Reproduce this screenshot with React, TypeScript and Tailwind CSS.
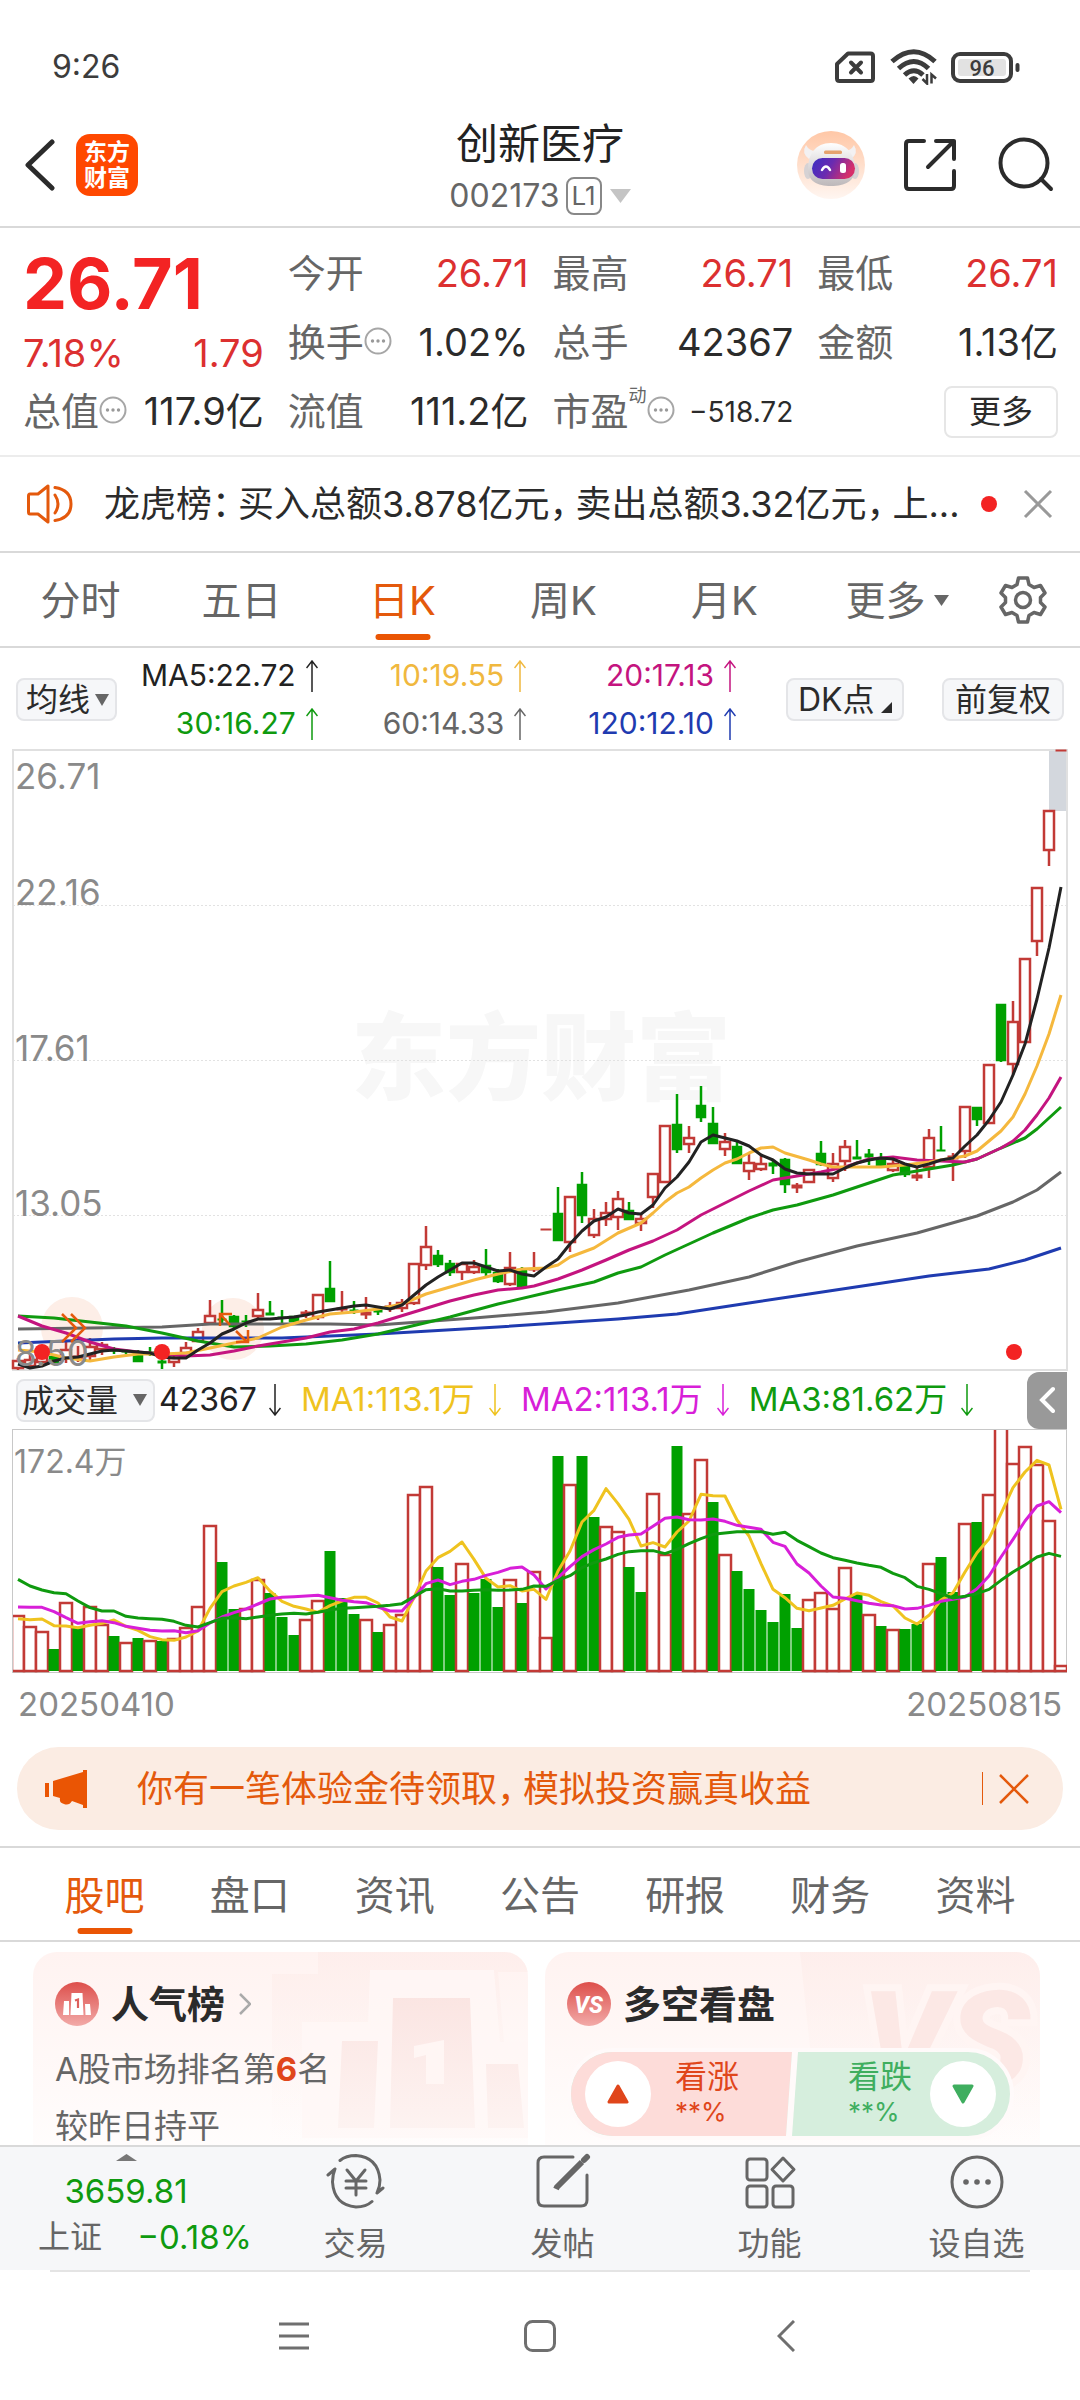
import React from "react";

type Candle = [up: 0 | 1, high: number, top: number, bottom: number, low: number];

const RED = "#c23a36";
const GREEN = "#00a000";

/* Daily candles, left to right, in chart units. */
const CANDLES: Candle[] = [
  [1, 1358, 1361, 1368, 1370], [1, 1354, 1360, 1366, 1368], [1, 1350, 1355, 1362, 1364], [0, 1354, 1357, 1362, 1364],
  [1, 1340, 1350, 1358, 1363], [1, 1346, 1356, 1359, 1362], [1, 1338, 1347, 1356, 1360], [1, 1342, 1345, 1349, 1355],
  [0, 1347, 1350, 1351, 1354], [0, 1349, 1351, 1352, 1354], [0, 1350, 1354, 1361, 1361], [0, 1347, 1352, 1353, 1356],
  [0, 1350, 1361, 1363, 1369], [1, 1354, 1358, 1362, 1367], [1, 1342, 1348, 1353, 1354], [1, 1328, 1332, 1341, 1342],
  [1, 1300, 1316, 1323, 1324], [0, 1300, 1319, 1320, 1323], [0, 1315, 1317, 1326, 1330], [0, 1315, 1321, 1322, 1327],
  [1, 1293, 1310, 1316, 1320], [0, 1301, 1313, 1315, 1315], [0, 1310, 1317, 1318, 1323], [0, 1316, 1317, 1321, 1322],
  [1, 1310, 1312, 1314, 1318], [1, 1295, 1295, 1317, 1320], [0, 1261, 1289, 1301, 1301], [1, 1291, 1308, 1310, 1312],
  [0, 1301, 1310, 1311, 1314], [1, 1297, 1312, 1315, 1319], [0, 1306, 1309, 1312, 1315], [1, 1302, 1306, 1309, 1312],
  [1, 1299, 1303, 1308, 1312], [1, 1264, 1264, 1303, 1305], [1, 1226, 1247, 1265, 1270], [0, 1250, 1256, 1264, 1267],
  [0, 1260, 1264, 1272, 1276], [1, 1263, 1264, 1272, 1280], [1, 1260, 1267, 1272, 1274], [0, 1249, 1266, 1272, 1278],
  [0, 1269, 1273, 1281, 1283], [1, 1252, 1268, 1284, 1286], [0, 1267, 1270, 1286, 1289], [1, 1252, 1269, 1270, 1272],
  [1, 1229, 1229, 1230, 1230], [0, 1187, 1214, 1240, 1240], [1, 1197, 1197, 1242, 1252], [0, 1172, 1185, 1215, 1223],
  [1, 1209, 1219, 1235, 1238], [1, 1202, 1213, 1219, 1226], [1, 1191, 1199, 1217, 1230], [0, 1202, 1211, 1219, 1219],
  [1, 1213, 1219, 1223, 1231], [1, 1174, 1174, 1197, 1208], [1, 1126, 1126, 1182, 1183], [0, 1094, 1125, 1149, 1153],
  [1, 1126, 1138, 1144, 1153], [0, 1086, 1106, 1117, 1122], [0, 1107, 1124, 1143, 1144], [1, 1133, 1142, 1149, 1156],
  [0, 1142, 1147, 1163, 1163], [1, 1153, 1163, 1171, 1180], [1, 1156, 1164, 1169, 1171], [0, 1160, 1163, 1166, 1174],
  [0, 1158, 1160, 1184, 1193], [1, 1183, 1185, 1188, 1193], [1, 1169, 1170, 1182, 1183], [0, 1141, 1154, 1164, 1166],
  [1, 1153, 1164, 1178, 1182], [1, 1140, 1147, 1161, 1171], [0, 1140, 1157, 1159, 1159], [0, 1149, 1154, 1157, 1165],
  [0, 1153, 1160, 1165, 1165], [1, 1160, 1164, 1170, 1172], [0, 1166, 1167, 1174, 1177], [1, 1166, 1175, 1178, 1181],
  [1, 1129, 1138, 1167, 1178], [0, 1126, 1150, 1151, 1151], [1, 1153, 1156, 1159, 1181], [1, 1107, 1107, 1151, 1158],
  [0, 1108, 1108, 1119, 1126], [1, 1065, 1065, 1123, 1124], [0, 1005, 1005, 1060, 1062], [1, 1001, 1022, 1064, 1075],
  [1, 959, 959, 1042, 1043], [1, 888, 888, 941, 956], [1, 811, 811, 850, 866], [1, 750, 750, 751, 751],
];

/* Moving averages as [day, level] pairs. */
const PRICE_LINES: { color: string; points: [number, number][] }[] = [
  { color: "#1f3bb0", points: [[0, 1343], [8, 1339], [12, 1338], [22, 1338], [30, 1334], [40, 1327], [50, 1319], [55, 1314], [61, 1303], [66, 1294], [71, 1285], [76, 1276], [81, 1269], [84, 1260], [87, 1248]] },
  { color: "#666666", points: [[0, 1329], [6, 1328], [12, 1327], [16, 1324], [20, 1324], [26, 1324], [30, 1325], [38, 1318], [44, 1312], [50, 1303], [56, 1290], [61, 1277], [65, 1262], [70, 1246], [75, 1233], [80, 1216], [83, 1202], [85, 1190], [87, 1172]] },
  { color: "#0f9a0f", points: [[0, 1316], [3, 1318], [6, 1322], [9, 1326], [12, 1333], [15, 1341], [18, 1347], [21, 1346], [24, 1344], [27, 1340], [30, 1334], [36, 1317], [40, 1304], [45, 1290], [48, 1282], [50, 1273], [52, 1267], [54, 1255], [56, 1244], [58, 1233], [61, 1218], [63, 1210], [65, 1205], [68, 1195], [70, 1187], [73, 1175], [75, 1171], [78, 1165], [80, 1159], [82, 1148], [84, 1138], [85, 1129], [86, 1118], [87, 1107]] },
  { color: "#c4147f", points: [[0, 1316], [2, 1326], [4, 1333], [6, 1342], [8, 1349], [10, 1352], [12, 1354], [14, 1356], [16, 1355], [18, 1351], [20, 1346], [22, 1342], [24, 1338], [26, 1332], [28, 1329], [30, 1323], [33, 1312], [36, 1301], [38, 1295], [40, 1290], [42, 1288], [43, 1286], [45, 1279], [47, 1270], [49, 1260], [51, 1250], [53, 1241], [55, 1230], [57, 1215], [59, 1203], [61, 1191], [63, 1180], [65, 1176], [67, 1172], [69, 1167], [71, 1159], [73, 1157], [75, 1160], [77, 1161], [79, 1162], [80, 1159], [82, 1148], [83, 1141], [84, 1130], [85, 1115], [86, 1098], [87, 1077]] },
  { color: "#f5b83d", points: [[0, 1350], [2, 1352], [4, 1358], [6, 1361], [8, 1357], [10, 1354], [12, 1354], [14, 1353], [16, 1348], [18, 1343], [20, 1338], [22, 1327], [24, 1320], [26, 1314], [28, 1312], [30, 1309], [32, 1304], [34, 1294], [36, 1287], [38, 1280], [40, 1274], [42, 1269], [44, 1268], [45, 1265], [46, 1257], [48, 1248], [50, 1233], [52, 1223], [53, 1213], [54, 1202], [55, 1193], [56, 1187], [57, 1178], [58, 1170], [59, 1163], [60, 1159], [61, 1153], [62, 1148], [63, 1147], [64, 1153], [66, 1160], [67, 1164], [68, 1167], [70, 1167], [72, 1167], [74, 1165], [76, 1162], [78, 1158], [79, 1156], [80, 1151], [82, 1131], [83, 1117], [84, 1094], [85, 1066], [86, 1034], [87, 995]] },
  { color: "#222222", points: [[0, 1364], [1, 1368], [2, 1366], [3, 1361], [4, 1358], [5, 1357], [6, 1354], [7, 1351], [8, 1350], [9, 1351], [10, 1352], [11, 1353], [12, 1357], [13, 1358], [14, 1358], [15, 1350], [16, 1343], [17, 1334], [18, 1329], [19, 1323], [20, 1319], [21, 1319], [22, 1318], [23, 1317], [24, 1315], [25, 1312], [26, 1310], [27, 1308], [28, 1306], [29, 1305], [30, 1307], [31, 1309], [32, 1305], [33, 1295], [34, 1285], [35, 1277], [36, 1270], [37, 1263], [38, 1263], [39, 1267], [40, 1271], [41, 1270], [42, 1274], [43, 1276], [44, 1267], [45, 1259], [46, 1244], [47, 1231], [48, 1221], [49, 1217], [50, 1209], [51, 1213], [52, 1214], [53, 1205], [54, 1188], [55, 1177], [56, 1162], [57, 1142], [58, 1135], [59, 1138], [60, 1141], [61, 1146], [62, 1155], [63, 1160], [64, 1169], [65, 1173], [66, 1174], [67, 1174], [68, 1174], [69, 1168], [70, 1163], [71, 1160], [72, 1158], [73, 1159], [74, 1164], [75, 1167], [76, 1164], [77, 1160], [78, 1158], [79, 1146], [80, 1135], [81, 1120], [82, 1102], [83, 1075], [84, 1044], [85, 999], [86, 948], [87, 887]] },
];

/* Top of each volume bar and of the three averages, in thirds of a unit; the base line is at 900. */
const VOLUME_TOPS = [
  736, 767, 783, 835, 696, 770, 709, 762, 796, 817, 801, 811, 811, 803, 771, 707, 465, 572, 715, 713, 626, 666,
  738, 792, 746, 690, 541, 681, 729, 746, 782, 762, 733, 371, 348, 587, 672, 580, 665, 624, 709, 628, 696, 604,
  801, 256, 343, 255, 438, 468, 483, 587, 662, 368, 553, 225, 429, 268, 392, 551, 600, 653, 717, 754, 669, 772,
  687, 667, 713, 591, 668, 732, 766, 776, 773, 760, 578, 557, 663, 458, 454, 372, 160, 278, 228, 282, 450, 885,
];
const VOLUME_UP =
  "RRRGRGRRGRGRGRRRRGGRRGGGRRGGGRGRRRRGGRGGGRGRRGRGGRRGGRRGRRGRGGGGGGRRRRGRGRGGRGGRGRRRRRRR";

const VOLUME_LINES = [
  {
    color: "#efc31f",
    points: [743, 746, 744, 764, 765, 770, 763, 757, 747, 766, 778, 797, 806, 808, 798, 780, 712, 662, 645, 634, 620, 660, 691, 706, 714, 724, 704, 690, 679, 679, 696, 738, 750, 680, 600, 560, 541, 513, 565, 622, 648, 644, 660, 655, 685, 600, 540, 453, 418, 353, 398, 445, 525, 515, 528, 483, 450, 370, 374, 375, 447, 495, 578, 655, 680, 712, 719, 711, 703, 684, 666, 673, 692, 705, 741, 759, 733, 687, 665, 603, 545, 503, 428, 350, 303, 268, 282, 415],
  },
  {
    color: "#d81fd8",
    points: [708, 709, 709, 722, 740, 757, 752, 749, 755, 766, 772, 778, 780, 779, 785, 779, 756, 738, 725, 714, 699, 684, 679, 677, 675, 673, 680, 688, 692, 695, 708, 720, 720, 680, 638, 627, 641, 631, 625, 613, 604, 592, 588, 612, 654, 620, 587, 557, 536, 519, 499, 492, 489, 466, 442, 438, 446, 447, 444, 451, 463, 469, 475, 514, 526, 579, 606, 645, 678, 682, 689, 697, 702, 704, 714, 712, 703, 691, 685, 678, 653, 615, 558, 505, 450, 405, 392, 425],
  },
  {
    color: "#0f9a0f",
    points: [625, 645, 657, 665, 668, 690, 710, 720, 720, 736, 741, 743, 745, 751, 763, 768, 755, 742, 740, 743, 738, 733, 729, 727, 729, 724, 717, 712, 710, 708, 706, 703, 698, 677, 656, 653, 660, 660, 658, 656, 658, 657, 655, 645, 646, 628, 614, 590, 575, 564, 550, 542, 539, 539, 548, 535, 518, 503, 490, 486, 482, 482, 482, 490, 484, 508, 527, 546, 560, 568, 576, 583, 589, 607, 620, 646, 655, 668, 681, 676, 668, 655, 628, 603, 582, 558, 547, 556],
  },
];

const dayX = (i: number) => Math.round(18 + i * 11.99);
const volumeY = (v: number) => Math.round(v / 3);

function StatusBar() {
  return (
    <div className="flex h-[104px] items-center pt-[30px] pr-[60px] pl-[52px] text-[#3c3c3c]">
      <span className="flex-1 text-[32px] leading-10">9:26</span>
      <svg className="mr-[15px] h-8 w-10" viewBox="0 0 40 32" fill="none" stroke="currentColor" strokeWidth="4">
        <path d="M13 2.5H35.5Q38 2.5 38 5V27.500Q38 30 35.500 30H4.500Q2 30 2 27.500V13Z" strokeLinejoin="round" />
        <path d="M16 11.500L26 21.500M26 11.500L16 21.500" strokeLinecap="round" />
      </svg>
      <svg className="mr-[13px] h-9 w-12" viewBox="0 0 48 36" fill="none" stroke="currentColor" strokeWidth="5">
        <path d="M2 12.500Q24 -7 45 12.500" />
        <path d="M8.500 19.500Q24 5.500 38.500 19.500" />
        <path d="M14.500 26Q24 17.500 33 26" />
        <path d="M18.500 29.500Q24 24.500 28.500 29.500L23.500 35Z" fill="currentColor" stroke="none" />
        <path d="M37 25V34.500L32.500 30M41.500 34.500V25.500L46 29.500" strokeWidth="2.500" />
      </svg>
      <svg className="h-[31px] w-[69px]" viewBox="0 0 69 31">
        <rect x="2" y="2" width="58" height="27" rx="7" fill="none" stroke="currentColor" strokeWidth="4" />
        <rect x="7" y="7" width="48" height="17" rx="3" fill="#e2e2e2" />
        <rect x="64.500" y="11" width="4" height="9" rx="2" fill="currentColor" />
        <text x="31" y="23.500" textAnchor="middle" fontSize="22" fontWeight="500" fill="currentColor" fontFamily="Roboto">96</text>
      </svg>
    </div>
  );
}

function Robot() {
  return (
    <svg className="size-[68px]" viewBox="0 0 68 68">
      <defs>
        <linearGradient id="halo" x1="0" y1="0" x2="0" y2="1">
          <stop offset="0" stopColor="#ffc7a6" />
          <stop offset="1" stopColor="#fff6f1" />
        </linearGradient>
        <linearGradient id="visor" x1="0" y1="0" x2="1" y2="0.300">
          <stop offset="0" stopColor="#3a2fc4" />
          <stop offset="0.500" stopColor="#6a2bb0" />
          <stop offset="1" stopColor="#d62f6a" />
        </linearGradient>
        <linearGradient id="shell" x1="0" y1="0" x2="0" y2="1">
          <stop offset="0" stopColor="#ffffff" />
          <stop offset="1" stopColor="#bdb8ba" />
        </linearGradient>
      </defs>
      <circle cx="34" cy="34" r="34" fill="url(#halo)" />
      <path d="M12 28Q4 22 9 14Q12 20 19 20ZM54 28Q62 22 57 14Q54 20 47 20Z" fill="#f3f1f2" />
      <ellipse cx="11" cy="40" rx="4" ry="8" fill="#d6d2d4" />
      <ellipse cx="58" cy="40" rx="4" ry="8" fill="#d6d2d4" />
      <path d="M34 12C50 12 58 24 58 38C58 50 48 55 34 55C20 55 11 50 11 38C11 24 18 12 34 12Z" fill="url(#shell)" />
      <rect x="27" y="19.500" width="18" height="3.500" rx="1.500" fill="#e5a26e" />
      <rect x="15" y="27" width="43" height="21" rx="10.500" fill="url(#visor)" />
      <path d="M25 39Q29 32 33 39" fill="none" stroke="#fff" strokeWidth="2.500" strokeLinecap="round" />
      <rect x="43" y="32" width="6" height="10" rx="2.500" fill="#fff" />
    </svg>
  );
}

function Header() {
  return (
    <header className="relative flex h-[124px] items-center border-b-2 border-[#d9d9d9] pr-[26px] pl-6 text-[#2b2b2b]">
      <button aria-label="返回" className="w-[52px]">
        <svg className="h-[52px] w-8" viewBox="0 0 32 52" fill="none" stroke="currentColor" strokeWidth="5">
          <path d="M28 3L4 26L28 49" strokeLinecap="round" strokeLinejoin="round" />
        </svg>
      </button>
      <a
        href="#home"
        className="flex size-[62px] flex-col items-center justify-center rounded-[14px] bg-[#ff4800] text-[23px] leading-[26px] font-bold text-white"
      >
        <span>东方</span>
        <span>财富</span>
      </a>
      <div className="absolute inset-x-0 top-4 mx-auto flex w-fit flex-col items-center">
        <h1 className="text-[42px] leading-[48px] text-[#222]">创新医疗</h1>
        <div className="mt-[8px] flex items-center text-[32px] leading-[40px] text-[#666]">
          <span>002173</span>
          <span className="ml-[6px] rounded-lg border-2 border-[#888] px-1 text-[26px] leading-[34px]">L1</span>
          <svg className="ml-2 h-[14px] w-[21px]" viewBox="0 0 21 14"><path d="M0 0H21L10.500 14Z" fill="#c4c4c4" /></svg>
        </div>
      </div>
      <div className="ml-auto flex items-center">
        <button aria-label="智能助手"><Robot /></button>
        <button aria-label="分享" className="ml-[38px]">
          <svg className="size-[54px]" viewBox="0 0 54 54" fill="none" stroke="currentColor" strokeWidth="4" strokeLinecap="round" strokeLinejoin="round">
            <path d="M21 3H6Q3 3 3 6V48Q3 51 6 51H48Q51 51 51 48V33M33 3H51V21M51 3L25 29" />
          </svg>
        </button>
        <button aria-label="搜索" className="ml-[41px]">
          <svg className="size-[56px]" viewBox="0 0 56 56" fill="none" stroke="currentColor" strokeWidth="4" strokeLinecap="round">
            <circle cx="26" cy="26" r="23.500" />
            <path d="M43 42L53 52" />
          </svg>
        </button>
      </div>
    </header>
  );
}

function InfoDots() {
  return (
    <svg className="mb-1 size-7 shrink-0" viewBox="0 0 28 28">
      <circle cx="14" cy="14" r="12.500" fill="none" stroke="#a6a6a6" strokeWidth="2" />
      <g fill="#999"><circle cx="8.500" cy="14" r="1.700" /><circle cx="14" cy="14" r="1.700" /><circle cx="19.500" cy="14" r="1.700" /></g>
    </svg>
  );
}

function Stat({ label, value, tone = "text-[#2b2b2b]", info = false }: { label: string; value: string; tone?: string; info?: boolean }) {
  return (
    <div className="flex h-[69px] items-center whitespace-nowrap">
      <span className="text-[38px] text-[#666]">{label}</span>
      {info && <InfoDots />}
      <span className={`ml-auto text-[38px] ${tone}`}>{value}</span>
    </div>
  );
}

function Quote() {
  const red = "text-[#dc3030]";
  return (
    <section className="grid grid-cols-4 gap-x-6 border-b-2 border-[#ececec] pt-[11px] pr-[22px] pb-[9px] pl-[23px]">
      <div className="row-span-2">
        <div className="text-[70px] leading-[90px] font-bold text-[#f32323]">26.71</div>
        <div className={`flex justify-between text-[38px] leading-[48px] ${red}`}>
          <span>7.18%</span>
          <span>1.79</span>
        </div>
      </div>
      <Stat label="今开" value="26.71" tone={red} />
      <Stat label="最高" value="26.71" tone={red} />
      <Stat label="最低" value="26.71" tone={red} />
      <Stat label="换手" value="1.02%" info />
      <Stat label="总手" value="42367" />
      <Stat label="金额" value="1.13亿" />
      <Stat label="总值" value="117.9亿" info />
      <Stat label="流值" value="111.2亿" />
      <div className="flex h-[69px] items-center whitespace-nowrap">
        <span className="text-[38px] text-[#666]">市盈</span>
        <sup className="-top-4 text-[18px] text-[#666]">动</sup>
        <InfoDots />
        <span className="ml-auto text-[28px] text-[#2b2b2b]">−518.72</span>
      </div>
      <div className="flex h-[69px] items-center justify-end">
        <button className="h-[52px] w-[114px] rounded-lg border-2 border-[#e6e6e6] text-[32px] leading-10 text-[#2b2b2b]">更多</button>
      </div>
    </section>
  );
}

function Phrases({ parts }: { parts: string[] }) {
  return (
    <p className="flex flex-1 gap-2 text-[36px] whitespace-nowrap [font-feature-settings:'halt']">
      {parts.map((p) => (
        <span key={p}>{p}</span>
      ))}
    </p>
  );
}

function NewsBar() {
  return (
    <section className="flex h-[96px] items-center border-b-2 border-[#d9d9d9] px-[27px] text-[#2b2b2b]">
      <svg className="mr-[31px] h-10 w-[46px] shrink-0" viewBox="0 0 46 40" fill="none" stroke="#e4590c" strokeWidth="3" strokeLinejoin="round" strokeLinecap="round">
        <path d="M21 2V38L11 30H3Q1.500 30 1.500 28V12Q1.500 10 3 10H11Z" />
        <path d="M28 11Q34 20 28 29M28 3.500Q44 6 44 20Q44 34 28 36.500" />
      </svg>
      <Phrases parts={["龙虎榜：", "买入总额3.878亿元，", "卖出总额3.32亿元，", "上..."]} />
      <span className="size-4 shrink-0 rounded-full bg-[#f32323]" />
      <button aria-label="关闭公告" className="ml-[26px]">
        <svg className="size-[30px]" viewBox="0 0 30 30" stroke="#999" strokeWidth="3"><path d="M2 2L28 28M28 2L2 28" /></svg>
      </button>
    </section>
  );
}

function PeriodTabs() {
  return (
    <nav className="grid h-[95px] grid-cols-[161fr_161fr_161fr_161fr_161fr_184fr_68fr] border-b-2 border-[#d9d9d9] pr-[23px] text-[40px] text-[#666]">
      {["分时", "五日", "日K", "周K", "月K"].map((t) => (
        <button key={t} className={t === "日K" ? "relative pt-[2px] text-[#e4590c]" : "pt-[2px]"}>
          {t}
          {t === "日K" && <span className="absolute bottom-[6px] left-1/2 h-[6px] w-[55px] -translate-x-1/2 rounded-full bg-[#ea5504]" />}
        </button>
      ))}
      <button aria-haspopup="menu" className="flex items-center justify-center gap-2 pt-[2px]">
        更多
        <svg className="h-[11px] w-[15px]" viewBox="0 0 15 11"><path d="M0 0H15L7.500 11Z" fill="#666" /></svg>
      </button>
      <button aria-label="设置" className="flex items-center justify-center">
        <svg className="size-[50px]" viewBox="0 0 50 50" fill="none" stroke="#666" strokeWidth="3.500" strokeLinejoin="round">
          <path d="M20.500 3H29.500L31 9.500L36 12.500L42.500 10.500L47 18L42.500 22.500V27.500L47 32L42.500 39.500L36 37.500L31 40.500L29.500 47H20.500L19 40.500L14 37.500L7.500 39.500L3 32L7.500 27.500V22.500L3 18L7.500 10.500L14 12.500L19 9.500Z" />
          <circle cx="25" cy="25" r="7.500" />
        </svg>
      </button>
    </nav>
  );
}

function Arrow({ down = false }: { down?: boolean }) {
  return (
    <svg className="h-8 w-3 shrink-0" viewBox="0 0 12 32" fill="none" stroke="currentColor" strokeWidth="1.500">
      <path d={down ? "M6 0V31M0.500 24L6 31L11.500 24" : "M6 32V1M0.500 8L6 1L11.500 8"} />
    </svg>
  );
}

function Picker({ name, text, wide = false }: { name: string; text: string; wide?: boolean }) {
  return (
    <label className={`flex h-[43px] shrink-0 items-center rounded-lg border-2 border-[#e4e5e8] bg-[#f6f7f9] pr-[6px] text-[#2b2b2b] ${wide ? "gap-[14px] pl-1" : "gap-1 pl-2"}`}>
      <select aria-label={name} className="h-full appearance-none bg-transparent text-[32px] leading-[39px]">
        <option>{text}</option>
      </select>
      <svg className="h-3 w-[14px]" viewBox="0 0 14 12"><path d="M0 0H14L7 12Z" fill="#666" /></svg>
    </label>
  );
}

const AVERAGES: [string, string][] = [
  ["MA5:22.72", "text-[#222]"],
  ["10:19.55", "text-[#f0b83e]"],
  ["20:17.13", "text-[#c4147f]"],
  ["30:16.27", "text-[#0f9a0f]"],
  ["60:14.33", "text-[#666]"],
  ["120:12.10", "text-[#1f3bb0]"],
];

function AverageBar() {
  return (
    <section className="flex h-[101px] items-center px-4 pt-[2px]">
      <Picker name="均线指标" text="均线" />
      <div className="grid flex-1 grid-cols-[201fr_209fr_210fr]">
        {AVERAGES.map(([text, tone]) => (
          <span key={text} className={`flex h-12 items-center justify-end gap-[10px] text-[30px] ${tone}`}>
            {text}
            <Arrow />
          </span>
        ))}
      </div>
      <button className="ml-[50px] flex h-[43px] w-[118px] items-center rounded-lg border-2 border-[#e4e5e8] bg-[#f6f7f9] pl-[10px] text-[32px] leading-9 whitespace-nowrap text-[#2b2b2b]">
        DK点
        <svg className="mb-[6px] ml-[6px] size-[11px] self-end" viewBox="0 0 11 11"><path d="M11 0V11H0Z" fill="#2b2b2b" /></svg>
      </button>
      <button className="ml-[38px] h-[43px] w-[122px] rounded-lg border-2 border-[#e4e5e8] bg-[#f6f7f9] text-[32px] leading-9 text-[#2b2b2b]">前复权</button>
    </section>
  );
}

function PriceChart() {
  return (
    <svg className="block w-full" viewBox="0 749 1080 622" role="img" aria-label="日K线图">
      <text x="541" y="1093" textAnchor="middle" fontSize="95" fontWeight="900" fill="#f7f7f7">东方财富</text>
      <g stroke="#e2e2e2" strokeDasharray="2 2"><path d="M13 905.500H1067M13 1060.500H1067M13 1215.500H1067" /></g>
      <rect x="13" y="750" width="1054" height="620" fill="none" stroke="#e0e0e0" strokeWidth="2" />
      <circle cx="72" cy="1328" r="31" fill="#fdeee7" />
      <circle cx="233" cy="1329" r="31" fill="#fdeee7" />
      <rect x="1049" y="751" width="17" height="60" fill="#d3d7dd" />
      {CANDLES.map(([up, high, top, bottom, low], i) => {
        const x = dayX(i);
        const color = up ? RED : GREEN;
        const flat = bottom - top < 4;
        return (
          <g key={i} stroke={color} strokeWidth="2.500">
            <path d={`M${x} ${high}V${top}M${x} ${bottom}V${low}`} />
            <rect x={x - (up ? 5 : 4)} y={top} width={up ? 10 : 8} height={Math.max(bottom - top, 1)} fill={up && !flat ? "#fff" : color} strokeWidth={flat ? 1 : 2.5} />
          </g>
        );
      })}
      {PRICE_LINES.map((l) => (
        <polyline key={l.color} fill="none" stroke={l.color} strokeWidth="3" strokeLinejoin="round" points={l.points.map(([i, y]) => `${dayX(i)},${y}`).join(" ")} />
      ))}
      <g fontSize="35" fill="#8a8a8a">
        <text x="15" y="789">26.71</text>
        <text x="15" y="905">22.16</text>
        <text x="15" y="1061">17.61</text>
        <text x="15" y="1216">13.05</text>
        <text x="15" y="1366">8.50</text>
      </g>
      <g fill="none" stroke="#e4590c" strokeWidth="2.500">
        <path d="M62 1314L76 1328L62 1342M71 1314L85 1328L71 1342" />
        <path d="M220 1326V1314H232M221 1315L230 1325M236 1331L247 1342M248 1330V1342H236" />
      </g>
      <g fill="#f32323"><circle cx="42" cy="1352" r="8" /><circle cx="162" cy="1352" r="8" /><circle cx="1014" cy="1352" r="8" /></g>
    </svg>
  );
}

function VolumeBar() {
  return (
    <section className="flex h-[58px] items-center pr-[13px] pl-4 text-[33px] whitespace-nowrap">
      <Picker name="副图指标" text="成交量" wide />
      <span className="ml-1 flex items-center gap-3 text-[32px] text-[#222]">42367<Arrow down /></span>
      <span className="ml-5 flex items-center gap-[14px] text-[#efc31f]">MA1:113.1万<Arrow down /></span>
      <span className="ml-5 flex items-center gap-[14px] text-[#d81fd8]">MA2:113.1万<Arrow down /></span>
      <span className="ml-5 flex items-center gap-[14px] text-[#0f9a0f]">MA3:81.62万<Arrow down /></span>
      <button aria-label="展开" className="ml-auto flex h-[57px] w-10 items-center justify-center rounded-l-xl bg-[#999]">
        <svg className="h-7 w-4" viewBox="0 0 16 28" fill="none" stroke="#fff" strokeWidth="4" strokeLinecap="round"><path d="M14 3L3 14L14 25" /></svg>
      </button>
    </section>
  );
}

function VolumeChart() {
  return (
    <div>
      <svg className="block w-full" viewBox="0 58 1080 244" role="img" aria-label="成交量图">
        <rect x="12.500" y="58.500" width="1054" height="243" fill="none" stroke="#c8c8c8" />
        <text x="14" y="102" fontSize="32" fill="#8a8a8a">172.4万</text>
        <clipPath id="volume-area"><rect x="13" y="59" width="1054" height="243" /></clipPath>
        <g clipPath="url(#volume-area)">
          {VOLUME_TOPS.map((top, i) =>
            VOLUME_UP[i] === "R" ? (
              <rect key={i} x={dayX(i) - 6} y={volumeY(top)} width="12" height={300 - volumeY(top)} fill="#fff" stroke={RED} strokeWidth="2.500" />
            ) : (
              <rect key={i} x={dayX(i) - 5.5} y={volumeY(top)} width="11" height={300 - volumeY(top)} fill={GREEN} />
            ),
          )}
          {VOLUME_LINES.map((l) => (
            <polyline key={l.color} fill="none" stroke={l.color} strokeWidth="3" strokeLinejoin="round" points={l.points.map((y, i) => `${dayX(i)},${y / 3}`).join(" ")} />
          ))}
        </g>
      </svg>
      <div className="flex justify-between px-[18px] pt-[11px] text-[33px] leading-10 text-[#8a8a8a]">
        <span>20250410</span>
        <span>20250815</span>
      </div>
    </div>
  );
}

function Promo() {
  return (
    <div className="mx-[17px] mt-[23px] mb-4 flex h-[83px] items-center rounded-full bg-[#fbece3] pr-[34px] pl-7 text-[#e4590c]">
      <svg className="mr-[50px] h-[38px] w-[42px] shrink-0" viewBox="0 0 42 38" fill="#ea5504">
        <path d="M0 13H4V27H0ZM8 11L38 2V0H42V38H38V35L27 31Q24 36 19 34Q14 33 15 28L8 26Z" />
      </svg>
      <Phrases parts={["你有一笔体验金待领取，", "模拟投资赢真收益"]} />
      <span className="h-[33px] w-px bg-[#e4590c]" />
      <button aria-label="关闭提示" className="ml-4">
        <svg className="size-[30px]" viewBox="0 0 30 30" stroke="#e4590c" strokeWidth="2.500"><path d="M1 1L29 29M29 1L1 29" /></svg>
      </button>
    </div>
  );
}

function SectionTabs() {
  return (
    <nav className="grid h-[96px] grid-cols-7 border-y-2 border-[#d9d9d9] px-8 text-[40px] text-[#666]">
      {["股吧", "盘口", "资讯", "公告", "研报", "财务", "资料"].map((t, i) => (
        <button key={t} className={i === 0 ? "relative pt-[3px] text-[#e4590c]" : "pt-[3px]"}>
          {t}
          {i === 0 && <span className="absolute bottom-[6px] left-1/2 h-[6px] w-[55px] -translate-x-1/2 rounded-full bg-[#ea5504]" />}
        </button>
      ))}
    </nav>
  );
}

function Badge({ kind }: { kind: "rank" | "vs" }) {
  return (
    <svg className="size-11 shrink-0" viewBox="0 0 44 44">
      <defs>
        <linearGradient id="badge" x1="0" y1="0" x2="0" y2="1">
          <stop offset="0" stopColor="#dd4f4b" />
          <stop offset="1" stopColor="#f2aaa8" />
        </linearGradient>
      </defs>
      <circle cx="22" cy="22" r="22" fill="url(#badge)" />
      {kind === "rank" ? (
        <>
          <path d="M9 19H14V33H8ZM16.500 11H27.500L28.500 33H15.500ZM30 22H35L36 33H30.500Z" fill="#fff" />
          <path d="M20 18.500L23 17.500V26" fill="none" stroke="#dd5f5b" strokeWidth="2.200" />
        </>
      ) : (
        <text x="21.500" y="30.500" textAnchor="middle" fontSize="23" fontStyle="italic" fontWeight="800" fill="#fff" fontFamily="Roboto">VS</text>
      )}
    </svg>
  );
}

function Cards() {
  return (
    <section className="grid h-[203px] grid-cols-2 gap-[17px] overflow-hidden pt-[10px] pr-10 pl-[33px]">
      <article className="relative h-[240px] overflow-hidden rounded-[24px] bg-gradient-to-b from-[#fff3f1] to-white pt-[27px] pl-[22px] text-[#666]">
        <svg className="absolute top-0 right-0 h-[192px] w-[256px]" viewBox="0 0 256 192">
          <defs>
            <linearGradient id="fade" x1="0" y1="0" x2="0" y2="1">
              <stop offset="0" stopColor="#fae2df" />
              <stop offset="1" stopColor="#fdf2f0" />
            </linearGradient>
            <linearGradient id="haze" x1="0" y1="0" x2="0" y2="1">
              <stop offset="0" stopColor="#fdebe8" stopOpacity="0.600" />
              <stop offset="1" stopColor="#fdf3f1" stopOpacity="0" />
            </linearGradient>
          </defs>
          <path d="M46 0H256V20H226L232 90H256V192H0V22H46Z" fill="url(#haze)" />
          <path d="M98 18H222L228 90H256V186H30V70H96Z" fill="#fff8f6" opacity="0.800" />
          <path d="M70 89H106L102 176H66ZM121 46H198L203 176H118ZM214 112H246L252 176H216Z" fill="url(#fade)" opacity="0.850" />
          <path d="M142 94L172 88V132H154V103L142 106Z" fill="#fff6f4" />
        </svg>
        <div className="relative">
          <h2 className="flex h-[50px] items-center text-[38px] font-bold text-[#2b2b2b]">
            <Badge kind="rank" />
            <a href="#rank" className="ml-3 flex items-center gap-[14px]">
              人气榜
              <svg className="h-[22px] w-3" viewBox="0 0 12 22" fill="none" stroke="#aaa" strokeWidth="2.500"><path d="M1 1L11 11L1 21" /></svg>
            </a>
          </h2>
          <p className="mt-[18px] text-[33px] leading-[44px]">A股市场排名第<b className="text-[#e0461b]">6</b>名</p>
          <p className="mt-[13px] text-[33px] leading-[44px]">较昨日持平</p>
        </div>
      </article>
      <article className="relative h-[240px] overflow-hidden rounded-[24px] bg-gradient-to-b from-[#fff3f1] to-white pt-[27px] pl-[22px]">
        <svg className="absolute top-0 right-0 h-[192px] w-[240px]" viewBox="0 0 240 192">
          <path d="M0 0H240V192H20Z" fill="url(#haze)" />
          <text x="146" y="134" textAnchor="middle" fontSize="134" fontStyle="italic" fontWeight="900" fill="#fce8e5" stroke="#fff5f3" strokeWidth="14" paintOrder="stroke" fontFamily="Roboto">VS</text>
        </svg>
        <div className="relative">
          <h2 className="flex h-[50px] items-center gap-3 text-[38px] font-bold text-[#2b2b2b]">
            <Badge kind="vs" />
            多空看盘
          </h2>
          <div className="mt-[19px] mr-[26px] flex h-[92px] overflow-hidden rounded-full border-4 border-[#fffafa] bg-[#d6eedd] text-[32px] leading-9">
            <button className="flex flex-1 items-center bg-[#fddcd9] pl-[14px] text-left text-[#e0461b]">
              <span className="flex size-[66px] items-center justify-center rounded-full bg-white">
                <svg className="h-5 w-[22px]" viewBox="0 0 22 20"><path d="M11 2L20 18H2Z" fill="currentColor" stroke="currentColor" strokeWidth="3" strokeLinejoin="round" /></svg>
              </span>
              <span className="ml-6 flex flex-col">
                看涨
                <span className="text-[26px] leading-[34px]">**%</span>
              </span>
            </button>
            <svg className="h-full w-[14px]" viewBox="0 0 14 84" preserveAspectRatio="none">
              <path d="M0 0H8L2 84H0Z" fill="#fddcd9" />
              <path d="M8 0H14L8 84H2Z" fill="#fffafa" />
            </svg>
            <button className="flex flex-1 items-center justify-end pr-[14px] text-left text-[#3fae5f]">
              <span className="mr-[18px] flex flex-col">
                看跌
                <span className="text-[26px] leading-[34px]">**%</span>
              </span>
              <span className="flex size-[66px] items-center justify-center rounded-full bg-white">
                <svg className="h-5 w-[22px]" viewBox="0 0 22 20"><path d="M11 18L20 2H2Z" fill="currentColor" stroke="currentColor" strokeWidth="3" strokeLinejoin="round" /></svg>
              </span>
            </button>
          </div>
        </div>
      </article>
    </section>
  );
}

const ACTIONS: { label: string; icon: React.ReactNode }[] = [
  {
    label: "交易",
    icon: (
      <>
        <path d="M14 7.500Q20 2.500 30 2.500Q52 4 54 27Q54 34 51 40L57 35M46 48.500Q40 54 30 54Q8 52 6.500 29Q6.500 22 9 16L2 22" />
        <path d="M21 17L30 28L39 17M20 28H40M20 35H40M30 28V42" />
      </>
    ),
  },
  {
    label: "发帖",
    icon: (
      <>
        <path d="M40 4H11Q5 4 5 10V47Q5 53 11 53H48Q54 53 54 47V22" />
        <path d="M49 9L24 34L23 36" strokeWidth="6" strokeLinecap="butt" />
        <path d="M51 7L54 4" strokeWidth="6" />
      </>
    ),
  },
  {
    label: "功能",
    icon: (
      <>
        <rect x="7" y="6" width="20" height="21" rx="3" />
        <rect x="7" y="33" width="20" height="21" rx="3" />
        <rect x="33" y="33" width="20" height="21" rx="3" />
        <path d="M43 5L54 16.500L43 28L32 16.500Z" />
      </>
    ),
  },
  {
    label: "设自选",
    icon: (
      <>
        <circle cx="30" cy="29" r="25" />
        <g fill="currentColor" stroke="none"><circle cx="19" cy="29" r="2.800" /><circle cx="30" cy="29" r="2.800" /><circle cx="41" cy="29" r="2.800" /></g>
      </>
    ),
  },
];

function BottomBar() {
  return (
    <nav className="grid h-[125px] grid-cols-[252fr_207fr_207fr_207fr_207fr] border-t-2 border-[#d9d9d9] bg-[#f6f7f9] text-[32px] text-[#666]">
      <button className="flex flex-col items-center text-[33px] text-[#0f9a0f]">
        <svg className="mt-[7px] h-[7px] w-[21px]" viewBox="0 0 21 7"><path d="M0 7H21L10.500 0Z" fill="#777" /></svg>
        <span className="mt-[7px] leading-[46px]">3659.81</span>
        <span className="flex w-full justify-between pl-[38px] leading-[46px]">
          <span className="text-[32px] text-[#666]">上证</span>
          <span>−0.18%</span>
        </span>
      </button>
      {ACTIONS.map((a) => (
        <button key={a.label} className="flex flex-col items-center pt-[6px]">
          <svg className="h-[58px] w-[60px]" viewBox="0 0 60 58" fill="none" stroke="currentColor" strokeWidth="3" strokeLinejoin="round" strokeLinecap="round">{a.icon}</svg>
          <span className="mt-[10px] leading-[46px]">{a.label}</span>
        </button>
      ))}
    </nav>
  );
}

function SystemNav() {
  return (
    <div className="px-[50px]">
      <div className="flex h-[129px] items-center justify-center border-t-2 border-[#e4e4e4] text-[#6f6f6f]">
        <button aria-label="最近任务" className="flex w-[246px] justify-center">
          <svg className="size-8" viewBox="0 0 32 32" stroke="currentColor" strokeWidth="3"><path d="M1 4H31M1 16H31M1 28H31" /></svg>
        </button>
        <button aria-label="主屏幕" className="flex w-[246px] justify-center">
          <svg className="size-8" viewBox="0 0 32 32" fill="none" stroke="currentColor" strokeWidth="3"><rect x="1.500" y="1.500" width="29" height="29" rx="7" /></svg>
        </button>
        <button aria-label="后退" className="flex w-[246px] justify-center">
          <svg className="h-8 w-[18px]" viewBox="0 0 18 32" fill="none" stroke="currentColor" strokeWidth="3"><path d="M17 1L2 16L17 31" /></svg>
        </button>
      </div>
    </div>
  );
}

export default function App() {
  return (
    <div className="min-h-screen bg-white font-['Inter','Noto_Sans_CJK_SC',sans-serif]">
      <StatusBar />
      <Header />
      <main>
        <Quote />
        <NewsBar />
        <PeriodTabs />
        <AverageBar />
        <PriceChart />
        <VolumeBar />
        <VolumeChart />
        <Promo />
        <SectionTabs />
        <Cards />
      </main>
      <BottomBar />
      <SystemNav />
    </div>
  );
}
